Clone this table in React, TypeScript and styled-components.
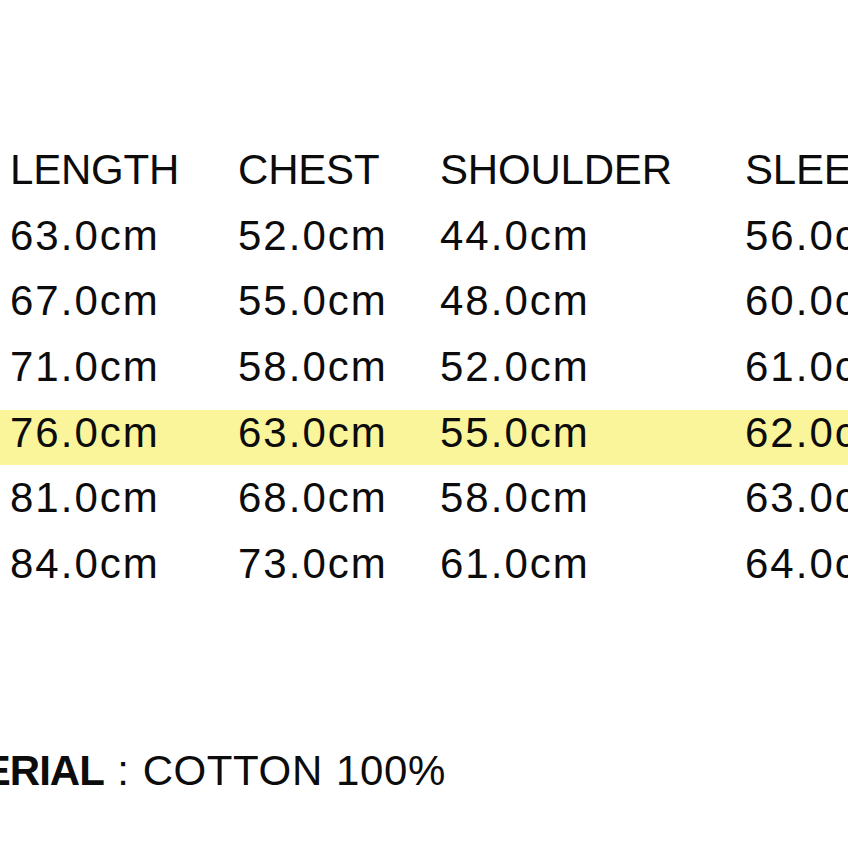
import React from "react";
import styled, { createGlobalStyle } from "styled-components";

const GlobalStyle = createGlobalStyle`
  html, body {
    margin: 0;
    padding: 0;
    background: #ffffff;
    overflow: hidden;
  }
`;

const Page = styled.div`
  width: 848px;
  height: 848px;
  overflow: hidden;
  background: #fff;
  font-family: "Liberation Sans", Arial, Helvetica, sans-serif;
  color: #0c0c0c;
  padding-top: 137px;
  box-sizing: border-box;
`;

const Table = styled.div`
  display: flex;
  flex-direction: column;
`;

const Row = styled.div<{ $highlight?: boolean; $head?: boolean }>`
  display: grid;
  grid-template-columns: 228px 202px 305px 1fr;
  padding-left: 10px;
  height: 65.67px;
  line-height: 65.67px;
  font-size: 42px;
  letter-spacing: ${(p) => (p.$head ? "-0.2px" : "2px")};
  white-space: nowrap;
  background: ${(p) =>
    p.$highlight
      ? "linear-gradient(to bottom, transparent 10px, #faf59b 10px, #faf59b 66px)"
      : "transparent"};
`;

const Cell = styled.span`
  overflow: visible;
`;

const Material = styled.div`
  margin-top: 141px;
  height: 66px;
  line-height: 66px;
  font-size: 42px;
  letter-spacing: 0.6px;
  word-spacing: 1px;
  white-space: nowrap;
  margin-left: -102px;
`;

const Label = styled.b`
  font-weight: 700;
  letter-spacing: -1px;
`;

const header = ["LENGTH", "CHEST", "SHOULDER", "SLEEVE"];
const rows = [
  ["63.0cm", "52.0cm", "44.0cm", "56.0cm"],
  ["67.0cm", "55.0cm", "48.0cm", "60.0cm"],
  ["71.0cm", "58.0cm", "52.0cm", "61.0cm"],
  ["76.0cm", "63.0cm", "55.0cm", "62.0cm"],
  ["81.0cm", "68.0cm", "58.0cm", "63.0cm"],
  ["84.0cm", "73.0cm", "61.0cm", "64.0cm"],
];

export default function App() {
  return (
    <>
      <GlobalStyle />
      <Page>
        <Table>
          <Row $head>
            {header.map((h) => (
              <Cell key={h}>{h}</Cell>
            ))}
          </Row>
          {rows.map((r, i) => (
            <Row key={i} $highlight={i === 3}>
              {r.map((v, j) => (
                <Cell key={j}>{v}</Cell>
              ))}
            </Row>
          ))}
        </Table>
        <Material>
          <Label>MATERIAL</Label> : COTTON 100%
        </Material>
      </Page>
    </>
  );
}
